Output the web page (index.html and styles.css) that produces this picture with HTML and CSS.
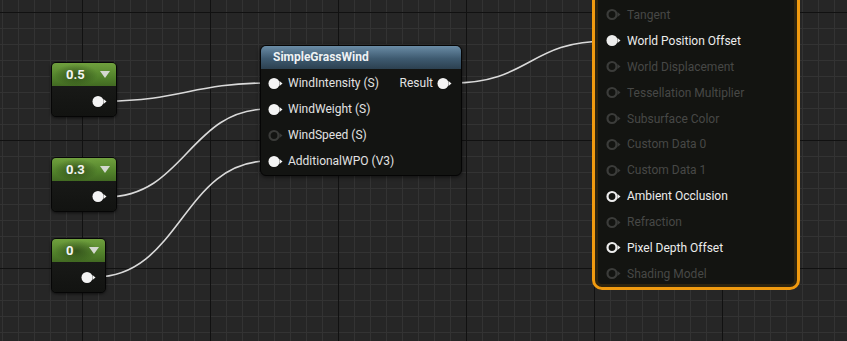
FILE: index.html
```html
<!DOCTYPE html>
<html lang="en">
<head>
  <meta charset="UTF-8">
  <title>Material Graph</title>
  <link rel="stylesheet" href="styles.css">
</head>
<body>

  <svg class="defs" width="0" height="0">
    <symbol id="pin-full" viewBox="0 0 16 13">
      <circle cx="6" cy="6.5" r="5.5" fill="currentColor"/>
      <polygon points="11.5,4 14.5,6.5 11.5,9" fill="currentColor"/>
    </symbol>
    <symbol id="pin-ring" viewBox="0 0 16 13">
      <circle cx="6" cy="6.5" r="4.5" fill="none" stroke="currentColor" stroke-width="2.2"/>
      <polygon points="11.5,4 14.5,6.5 11.5,9" fill="currentColor"/>
    </symbol>
  </svg>

  <div class="graph">

    <svg class="wires" width="847" height="341">
      <path d="M106 101 C 180 101, 194 83, 268 83"/>
      <path d="M106 197 C 185 197, 189 109, 268 109"/>
      <path d="M95 277 C 180 277, 183 161, 268 161"/>
      <path d="M452 83 C 530 83, 529 41, 607 41"/>
    </svg>

    <div class="const-node const-a">
      <div class="const-head"><span class="const-value">0.5</span><span class="caret"></span></div>
      <div class="const-body"><svg class="pin on"><use href="#pin-full"/></svg></div>
    </div>

    <div class="const-node const-b">
      <div class="const-head"><span class="const-value">0.3</span><span class="caret"></span></div>
      <div class="const-body"><svg class="pin on"><use href="#pin-full"/></svg></div>
    </div>

    <div class="const-node const-c">
      <div class="const-head"><span class="const-value">0</span><span class="caret"></span></div>
      <div class="const-body"><svg class="pin on"><use href="#pin-full"/></svg></div>
    </div>

    <div class="func-node">
      <div class="func-title">SimpleGrassWind</div>
      <div class="func-body">
        <div class="pin-col">
          <div class="pin-row"><svg class="pin on"><use href="#pin-full"/></svg>WindIntensity (S)</div>
          <div class="pin-row"><svg class="pin on"><use href="#pin-full"/></svg>WindWeight (S)</div>
          <div class="pin-row"><svg class="pin off"><use href="#pin-ring"/></svg>WindSpeed (S)</div>
          <div class="pin-row"><svg class="pin on"><use href="#pin-full"/></svg>AdditionalWPO (V3)</div>
        </div>
        <div class="pin-col out">
          <div class="pin-row">Result<svg class="pin on"><use href="#pin-full"/></svg></div>
        </div>
      </div>
    </div>

    <div class="material-node">
      <div class="mat-row off"><svg class="pin"><use href="#pin-ring"/></svg>Tangent</div>
      <div class="mat-row"><svg class="pin"><use href="#pin-full"/></svg>World Position Offset</div>
      <div class="mat-row off"><svg class="pin"><use href="#pin-ring"/></svg>World Displacement</div>
      <div class="mat-row off"><svg class="pin"><use href="#pin-ring"/></svg>Tessellation Multiplier</div>
      <div class="mat-row off"><svg class="pin"><use href="#pin-ring"/></svg>Subsurface Color</div>
      <div class="mat-row off"><svg class="pin"><use href="#pin-ring"/></svg>Custom Data 0</div>
      <div class="mat-row off"><svg class="pin"><use href="#pin-ring"/></svg>Custom Data 1</div>
      <div class="mat-row"><svg class="pin"><use href="#pin-ring"/></svg>Ambient Occlusion</div>
      <div class="mat-row off"><svg class="pin"><use href="#pin-ring"/></svg>Refraction</div>
      <div class="mat-row"><svg class="pin"><use href="#pin-ring"/></svg>Pixel Depth Offset</div>
      <div class="mat-row off"><svg class="pin"><use href="#pin-ring"/></svg>Shading Model</div>
    </div>

  </div>

</body>
</html>
```

FILE: styles.css
```css
body {
  margin: 0;
  background: #262626;
  font-family: Roboto, "Liberation Sans", sans-serif;
}

.defs {
  position: absolute;
}

/* graph canvas with minor (16px) and major (128px) grid lines */
.graph {
  position: relative;
  width: 847px;
  height: 341px;
  overflow: hidden;
  background-color: #262626;
  background-image:
    linear-gradient(#111 1px, transparent 1px),
    linear-gradient(90deg, #111 1px, transparent 1px),
    linear-gradient(#333 1px, transparent 1px),
    linear-gradient(90deg, #333 1px, transparent 1px);
  background-size: 128px 128px, 128px 128px, 16px 16px, 16px 16px;
  background-position: 0 12px, 82px 0, 0 12px, 2px 0;
}

.wires {
  position: absolute;
  left: 0;
  top: 0;
}

.wires path {
  fill: none;
  stroke: #dadada;
  stroke-width: 1.6;
}

.pin {
  width: 16px;
  height: 13px;
  flex: none;
}

.pin.on {
  color: #f4f4f4;
}

.pin.off {
  color: #3a3b39;
}

/* constant nodes */
.const-node {
  position: absolute;
  left: 51px;
  width: 64px;
  height: 53px;
  border: 1px solid #060606;
  border-radius: 5px;
  background: #161715;
  box-shadow: 0 1px 3px rgba(0, 0, 0, 0.6);
  overflow: hidden;
  display: flex;
  flex-direction: column;
}

.const-a { top: 62px; }
.const-b { top: 157px; }
.const-c { top: 238px; width: 53px; }

.const-head {
  height: 23px;
  display: flex;
  align-items: center;
  justify-content: space-between;
  padding: 0 6px 0 14px;
  background:
    radial-gradient(ellipse 22px 11px at 24px 52%, rgba(20, 35, 10, 0.5), transparent),
    linear-gradient(#70a03e, #52822b 60%, #426a22);
}

.const-value {
  color: #f4f4f4;
  font-weight: bold;
  font-size: 13px;
}

.caret {
  width: 0;
  height: 0;
  border-left: 5.5px solid transparent;
  border-right: 5.5px solid transparent;
  border-top: 7px solid #d4d8d0;
}

.const-body {
  flex: 1;
  display: flex;
  align-items: center;
  justify-content: flex-end;
  padding-right: 8px;
  background: linear-gradient(#181917, #121311);
}

/* function node */
.func-node {
  position: absolute;
  left: 260px;
  top: 45px;
  width: 200px;
  height: 129px;
  border: 1px solid #050505;
  border-radius: 6px;
  background: #131412;
  box-shadow: 0 1px 4px rgba(0, 0, 0, 0.6);
  overflow: hidden;
}

.func-title {
  height: 23px;
  line-height: 22px;
  padding-left: 12px;
  color: #eef2f4;
  font-weight: bold;
  font-size: 12px;
  background: linear-gradient(#6a8ca6, #3e5a70 55%, #2c4050);
}

.func-body {
  display: flex;
  justify-content: space-between;
  padding: 1px 8px 0 7px;
}

.pin-row {
  height: 26px;
  display: flex;
  align-items: center;
  gap: 4px;
  color: #e2e2e2;
  font-size: 12px;
}

/* material output node */
.material-node {
  position: absolute;
  left: 592px;
  top: -20px;
  width: 191px;
  height: 285px;
  border: 3px solid #f09a10;
  border-radius: 10px;
  background: #131411;
  box-shadow: inset 0 0 0 3px #2e240f;
  padding: 19px 0 0 11px;
}

.mat-row {
  height: 25.9px;
  display: flex;
  align-items: center;
  gap: 5px;
  color: #ececec;
  font-size: 12px;
}

.mat-row .pin {
  color: #ededed;
}

.mat-row.off {
  color: #474846;
}

.mat-row.off .pin {
  color: #3b3c3a;
}
```
